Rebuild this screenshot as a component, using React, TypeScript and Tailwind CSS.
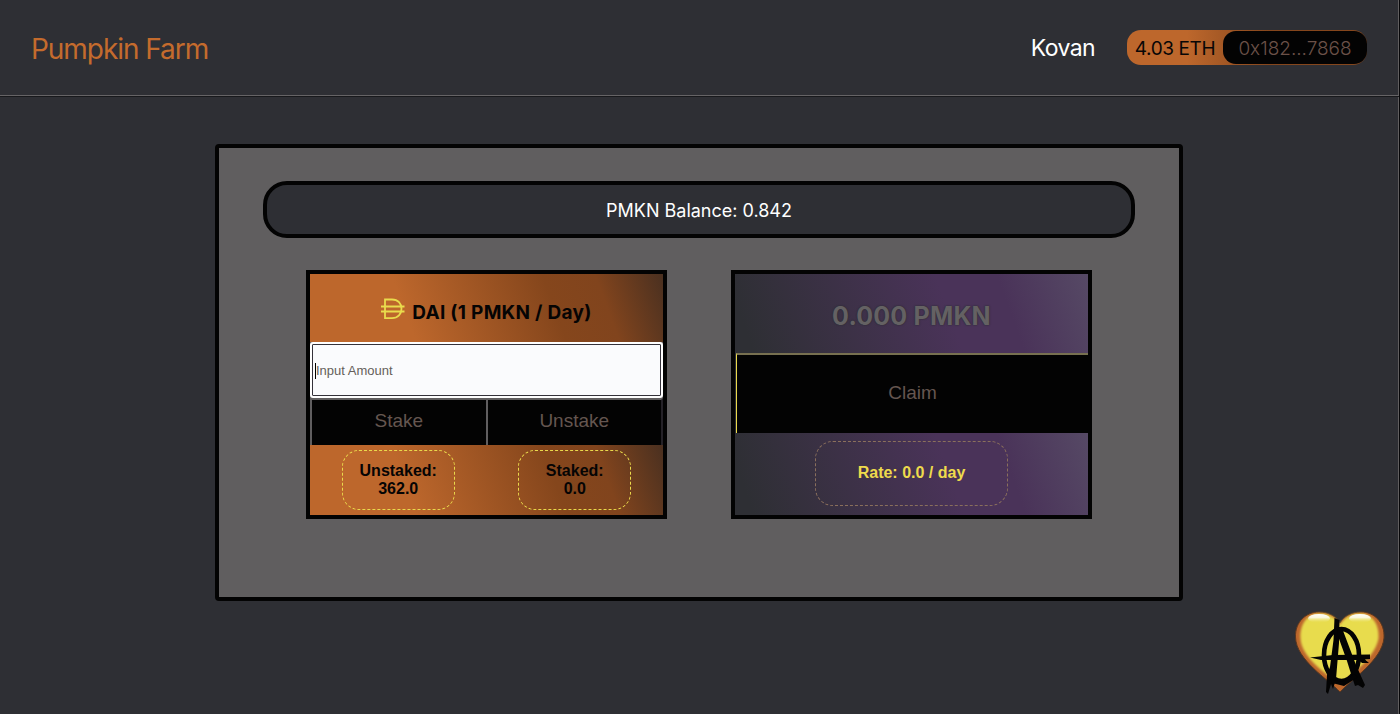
const DaiIcon = () => (
  <svg className="mb-2 h-[22px] w-6 shrink-0" viewBox="0 0 24 22" fill="none" stroke="#e9dc4d" strokeWidth="1.8">
    <path d="M4 1.500h7c6 0 9.500 4.200 9.500 9.300s-3.500 9.400-9.500 9.400H4zM0 8.500h23.500M0 13.500h23.500" />
  </svg>
);

const Heart = () => (
  <svg className="absolute left-[1294px] top-[610px] h-[86px] w-[92px]" viewBox="0 0 92 86">
    <defs>
      <linearGradient id="shine" x1="0" y1="0" x2="0" y2="1">
        <stop offset="0" stopColor="#fff" />
        <stop offset="0.4" stopColor="#fff" stopOpacity="0.8" />
        <stop offset="1" stopColor="#e8dc4e" stopOpacity="0" />
      </linearGradient>
      <filter id="soft" x="-10%" y="-10%" width="120%" height="120%">
        <feGaussianBlur stdDeviation="1" />
      </filter>
    </defs>
    <path d="M46 82C34 69 2 50 1.500 27C1 12 12 2 25 2C34 2 42 6 46 13C50 6 58 2 67 2C80 2 91 12 90 28C88 50 58 69 46 82Z" fill="#bd672c" stroke="#5a371f" strokeWidth="1" />
    <path d="M46 74C35 66 7 48 6.500 28C6 13 14 4 25 3.500C35 3 42 8 46 15C50 8 57 3 67 3.500C77 4 85.500 13 84.500 28C82 46 58 65 46 74Z" fill="#e8dc4e" filter="url(#soft)" />
    <ellipse cx="25" cy="8.500" rx="11" ry="4.500" fill="url(#shine)" />
    <ellipse cx="66" cy="8.500" rx="11" ry="4.500" fill="url(#shine)" />
    <ellipse cx="47.500" cy="45" rx="17.500" ry="26" fill="none" stroke="#030303" strokeWidth="4.600" />
    <path d="M40.500 8L45.500 10L45 33L42 69L39 79L37 74L34 84L32 82L33 65L36 57L39.500 30Z" fill="#030303" />
    <path d="M43 17L48 18L62 55L71 75L69 78L64 75L61 76L58 67L53 51L44 26Z" fill="#030303" />
    <path d="M16 47.500L39 45L76 44.500L76 49L71 49.500L75 53L68 53L65 50L39 50L27 50Z" fill="#030303" />
    <path d="M36 69L48 72L60 64L64 67L50 76L38 73Z" fill="#030303" />
  </svg>
);

const Header = () => (
  <header className="flex h-24 shrink-0 items-center justify-between border-b border-[#666466] pl-[31px] pr-8 shadow-[0_1px_0_#18191c]">
    <h1 className="whitespace-nowrap pt-0.5 text-[28px] font-normal leading-9 tracking-[-1.05px] text-[#c46b2d]">Pumpkin Farm</h1>
    <div className="flex items-center">
      <span className="mr-8 pt-0.5 text-[23px] font-normal tracking-[-0.6px] text-white">Kovan</span>
      <div className="flex h-[35px] w-60 justify-between rounded-[14px] bg-linear-to-r from-[#bd672c] from-25% to-[#85461c] to-60%">
        <span className="flex w-24 items-center justify-center whitespace-nowrap pt-[3px] text-[19px] tracking-[-0.4px] text-[#080606]">4.03 ETH</span>
        <span className="mt-px flex h-[33px] w-36 items-center justify-center rounded-[13px] bg-[#030303] pt-[3px] text-[19px] font-light tracking-[-0.02px] text-[#6b5148]">0x182...7868</span>
      </div>
    </div>
  </header>
);

const Stat = ({ label, value }: { label: string; value: string }) => (
  <div className="flex h-[60px] w-[113px] flex-col items-center justify-center rounded-[17px] border border-dashed border-[#ead94b] text-[16px] font-bold leading-[18px] text-[#050404]">
    <span>{label}</span>
    <span>{value}</span>
  </div>
);

const StakeCard = () => (
  <section className="flex h-[249px] w-[361px] flex-col border-4 border-[#030303] bg-[#605e5f] font-['Liberation_Sans',sans-serif]">
    <div className="flex h-[68px] items-center justify-center gap-[7px] bg-[linear-gradient(70deg,#bd672c_28%,#85461c_68%,#81441d_82%,#4a3020_100%)] pt-2.5 font-['Inter',sans-serif]">
      <DaiIcon />
      <h2 className="whitespace-nowrap text-[19px] font-bold tracking-[0.28px] text-[#050404]">DAI (1 PMKN / Day)</h2>
    </div>
    <div className="flex h-14 items-center rounded-[3px] border-2 border-white bg-[#fafbfd] px-[3px] pt-px text-[13px] text-[#65605a] outline outline-1 -outline-offset-3 outline-[#34323a]">
      <span className="h-4 w-px bg-black" />
      <span>Input Amount</span>
    </div>
    <div className="flex h-[47px] gap-[2px] border-x-2 border-t-2 border-[#605e5f] border-r-[#252228] bg-[#605e5f] text-[19px] text-[#655650]">
      <button className="flex-1 bg-[#030303] pb-[3px]">Stake</button>
      <button className="flex-1 bg-[#030303] pb-[3px]">Unstake</button>
    </div>
    <div className="flex flex-1 items-center justify-around bg-[linear-gradient(70deg,#bd672c_28%,#85461c_68%,#81441d_82%,#4a3020_100%)] pb-px">
      <Stat label="Unstaked:" value="362.0" />
      <Stat label="Staked:" value="0.0" />
    </div>
  </section>
);

const ClaimCard = () => (
  <section className="flex h-[249px] w-[361px] flex-col border-4 border-[#030303] bg-[#2e2f34] font-['Liberation_Sans',sans-serif]">
    <h2 className="flex h-[79px] items-center justify-center bg-[linear-gradient(70deg,#2e2f34_5%,#4a3359_60%,#4a3359_76%,#564965_100%)] pt-1.5 font-['Inter',sans-serif] text-[25px] font-bold tracking-[0.2px] text-[#646163] [text-shadow:0_0_1px_#2e2f34,0_0_2px_#2e2f34]">0.000 PMKN</h2>
    <button className="ml-px h-20 border-l border-t-2 border-l-[#ead94b] border-t-[#777050] bg-[#030303] pb-0.5 text-[19px] text-[#655650]">Claim</button>
    <div className="flex flex-1 items-center justify-center bg-[linear-gradient(70deg,#2e2f34_5%,#4a3359_60%,#4a3359_76%,#564965_100%)] pb-0.5">
      <div className="flex h-[65px] w-[193px] items-center justify-center rounded-[18px] border border-dashed border-[#8a6f5c] text-[16px] font-bold text-[#eedb4c]">Rate: 0.0 / day</div>
    </div>
  </section>
);

export default function App() {
  return (
    <div className="relative flex h-[714px] w-[1400px] flex-col overflow-hidden border-r border-[#08080a] bg-[#2e2f34] font-['Inter',sans-serif] shadow-[inset_-1px_0_#605e5f]">
      <Header />
      <main className="ml-[215px] mt-12 flex h-[457px] w-[968px] flex-col items-center rounded-[4px] border-4 border-[#030303] bg-[#605e5f] pt-[33px]">
        <div className="flex h-[57px] w-[872px] items-center justify-center rounded-[24px] border-4 border-[#030303] bg-[#2e2f34] pt-px text-[18px] text-white">PMKN Balance: 0.842</div>
        <div className="mt-8 flex gap-16">
          <StakeCard />
          <ClaimCard />
        </div>
      </main>
      <Heart />
    </div>
  );
}
